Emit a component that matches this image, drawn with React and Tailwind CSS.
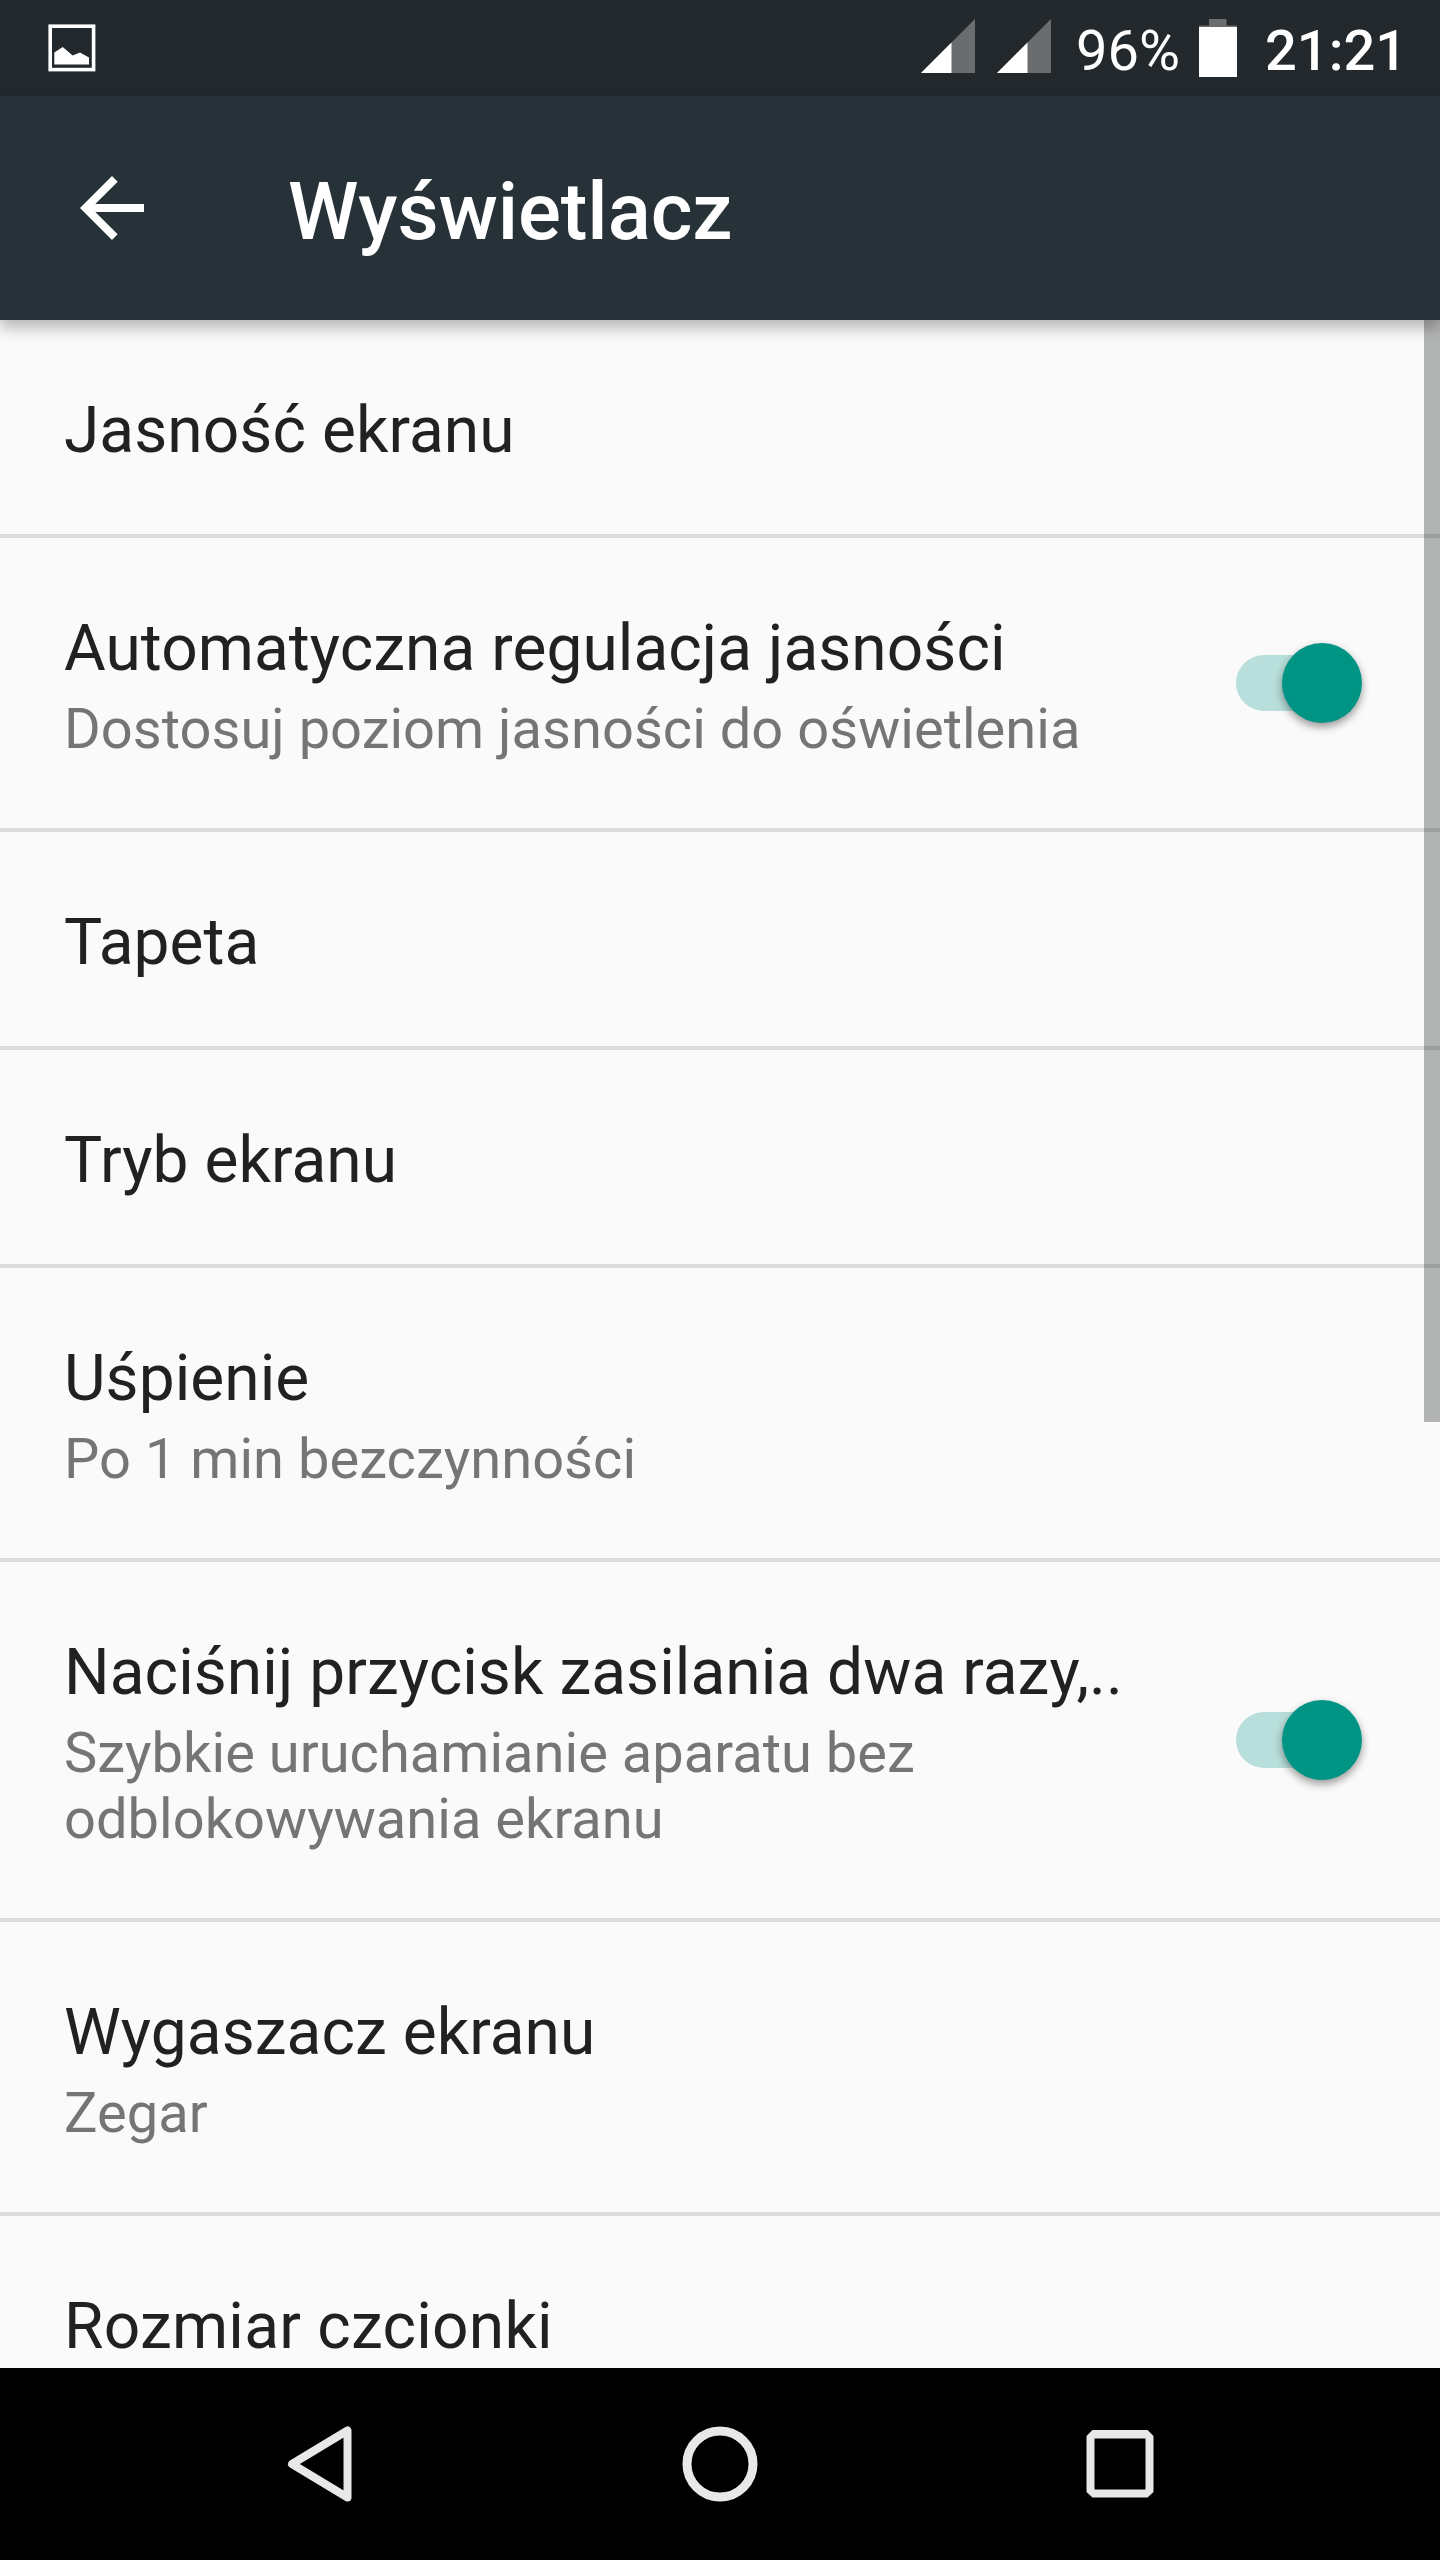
import React from "react";

const SETTINGS = [
  { title: "Jasność ekranu" },
  {
    title: "Automatyczna regulacja jasności",
    summary: "Dostosuj poziom jasności do oświetlenia",
    toggle: true,
  },
  { title: "Tapeta" },
  { title: "Tryb ekranu" },
  { title: "Uśpienie", summary: "Po 1 min bezczynności" },
  {
    title: "Naciśnij przycisk zasilania dwa razy,..",
    summary: "Szybkie uruchamianie aparatu bez odblokowywania ekranu",
    toggle: true,
  },
  { title: "Wygaszacz ekranu", summary: "Zegar" },
  { title: "Rozmiar czcionki" },
];

// --- Icons ---
const PictureIcon = () => (
  <svg className="size-12" viewBox="0 0 48 48">
    <rect x="2.2" y="2.2" width="43.4" height="43.4" fill="none" stroke="#fff" strokeWidth="3.6" />
    <path d="M6.3 40.5v-12l8.4-5.5 10 8.5 7.3-3 9 5v7z" fill="#fff" />
  </svg>
);

const SignalIcon = () => (
  <svg className="h-[54px] w-[54px]" viewBox="0 0 54 54">
    <path d="M0 54L54 0V54z" fill="#6b6c6d" />
    <path d="M0 54L30.5 23.5V54z" fill="#fff" />
  </svg>
);

const BatteryIcon = () => (
  <svg className="h-[58px] w-[38px]" viewBox="0 0 38 58">
    <path d="M10 0h17.5v6.5H38V10H0V6.5h10z" fill="#6b6c6d" />
    <path d="M0 8h38v50H0z" fill="#fff" />
  </svg>
);

const BackArrow = () => (
  <svg className="size-24" viewBox="0 0 24 24" fill="#fff">
    <path d="M20 11H7.83l5.59-5.59L12 4l-8 8 8 8 1.41-1.41L7.83 13H20v-2z" />
  </svg>
);

const Switch = () => (
  <div className="relative h-20 w-[126px] shrink-0">
    <div className="absolute top-3 left-0 h-14 w-[110px] rounded-full bg-[#b8dfdb]" />
    <div className="absolute top-0 right-0 size-20 rounded-full bg-[#009485] shadow-[0_4px_9px_rgba(0,0,0,0.4)]" />
  </div>
);

const SettingRow = ({ title, summary, toggle }) => (
  <li className="flex shrink-0 items-center justify-between border-b-4 border-[#dcdcdc] pr-[78px] pl-16 tracking-[0.06px] last:tracking-[0.25px]">
    <div className="w-[1080px] pt-[73px] pb-[66px]">
      <h2 className="text-[64px] leading-[75px] whitespace-nowrap text-[#212121]">{title}</h2>
      {summary && (
        <p className="mt-2.5 text-[56px] leading-[66px] tracking-[0.03px] text-[#757575]">
          {summary}
        </p>
      )}
    </div>
    {toggle && <Switch />}
  </li>
);

const StatusBar = () => (
  <div className="flex h-24 shrink-0 items-start justify-between bg-[#22282c] pr-[40px] pl-12 text-[56px] leading-[66px] text-white">
    <div className="pt-6">
      <PictureIcon />
    </div>
    <div className="flex items-start">
      <div className="flex gap-[22px] pt-[19px]">
        <SignalIcon />
        <SignalIcon />
      </div>
      <span className="w-[148px] pt-[18px] pl-[25px]">96%</span>
      <div className="pt-[19px]">
        <BatteryIcon />
      </div>
      <span className="w-[163px] pt-[18px] pl-[28px] font-medium">21:21</span>
    </div>
  </div>
);

const NavBar = () => (
  <nav className="flex h-48 shrink-0 items-center justify-center gap-[280px] bg-black">
    <svg className="size-[120px]" viewBox="0 0 120 120" fill="none" stroke="#e8e8e8">
      <path d="M32 60L87.5 26.5v67z" strokeWidth="8" strokeLinejoin="round" />
    </svg>
    <svg className="size-[120px]" viewBox="0 0 120 120" fill="none" stroke="#e8e8e8">
      <circle cx="60" cy="60" r="33" strokeWidth="9" />
    </svg>
    <svg className="size-[120px]" viewBox="0 0 120 120" fill="#e8e8e8">
      <path
        fillRule="evenodd"
        d="M32.5 26h55l6 6v56l-6 5.5h-55l-6-5.5V32zM34.5 34.5v51h51v-51z"
      />
    </svg>
  </nav>
);

export default function App() {
  return (
    <div className="flex h-[2560px] w-[1440px] flex-col overflow-hidden bg-[#fafafa] font-[Roboto,sans-serif]">
      <StatusBar />
      <header className="relative z-10 flex h-56 shrink-0 items-center bg-[#263238] pl-16 shadow-[0_8px_14px_rgba(0,0,0,0.27)]">
        <BackArrow />
        <h1 className="pt-2 pl-32 text-[80px] leading-[94px] font-medium tracking-[-0.1px] text-white">
          Wyświetlacz
        </h1>
      </header>
      <main className="relative min-h-0 flex-1 overflow-hidden">
        <ul className="flex flex-col">
          {SETTINGS.map((s) => (
            <SettingRow key={s.title} {...s} />
          ))}
        </ul>
        {/* scroll thumb over the list */}
        <div className="absolute top-0 right-0 h-[1102px] w-4 bg-[rgba(0,6,3,0.285)]" />
      </main>
      <NavBar />
    </div>
  );
}
